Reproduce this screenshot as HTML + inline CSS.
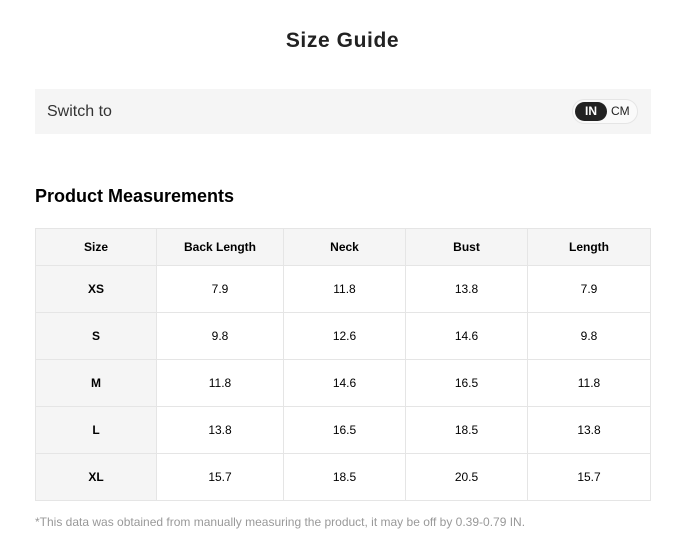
<!DOCTYPE html>
<html><head><style>
body{margin:0;width:685px;height:543px;background:#fff;font-family:"Liberation Sans",Arial,sans-serif;color:#222;position:relative}
h1{position:absolute;top:29px;left:0;width:685px;text-align:center;margin:0;font-size:21px;font-weight:bold;color:#222;letter-spacing:0.6px}
.bar{position:absolute;left:35px;top:89px;width:616px;height:45px;background:#f5f5f5}
.bar span{position:absolute;left:12px;top:14px;font-size:16px;color:#333}
.pill{position:absolute;left:537px;top:10px;width:66px;height:25px;border:1px solid #e5e5e5;border-radius:13px;background:#fafafa;box-sizing:border-box}
.pill .in{position:absolute;left:2px;top:2px;width:32px;height:19px;border-radius:10px;background:#222;color:#fff;font-size:12px;font-weight:bold;text-align:center;line-height:19px}
.pill .cm{position:absolute;left:38px;top:2px;font-size:12px;line-height:19px;color:#222}
h2{position:absolute;top:186px;left:35px;margin:0;font-size:18px;font-weight:bold;color:#000}
table{position:absolute;left:35px;top:228px;border-collapse:collapse;font-size:12px;color:#000}
td{border:1px solid #e5e5e5;text-align:center;height:46px;padding:0}
tr:first-child td{height:36px;background:#f5f5f5;font-weight:bold}
td:first-child{background:#f5f5f5;font-weight:bold}
.note{position:absolute;left:35px;top:515px;font-size:12px;color:#999}
</style></head><body>
<h1>Size Guide</h1>
<div class="bar"><span>Switch to</span><div class="pill"><div class="in">IN</div><div class="cm">CM</div></div></div>
<h2>Product Measurements</h2>
<table>
<colgroup><col style="width:121px"><col style="width:127px"><col style="width:122px"><col style="width:122px"><col style="width:123px"></colgroup>
<tr><td>Size</td><td>Back Length</td><td>Neck</td><td>Bust</td><td>Length</td></tr>
<tr><td>XS</td><td>7.9</td><td>11.8</td><td>13.8</td><td>7.9</td></tr>
<tr><td>S</td><td>9.8</td><td>12.6</td><td>14.6</td><td>9.8</td></tr>
<tr><td>M</td><td>11.8</td><td>14.6</td><td>16.5</td><td>11.8</td></tr>
<tr><td>L</td><td>13.8</td><td>16.5</td><td>18.5</td><td>13.8</td></tr>
<tr><td>XL</td><td>15.7</td><td>18.5</td><td>20.5</td><td>15.7</td></tr>
</table>
<div class="note">*This data was obtained from manually measuring the product, it may be off by 0.39-0.79 IN.</div>
</body></html>
